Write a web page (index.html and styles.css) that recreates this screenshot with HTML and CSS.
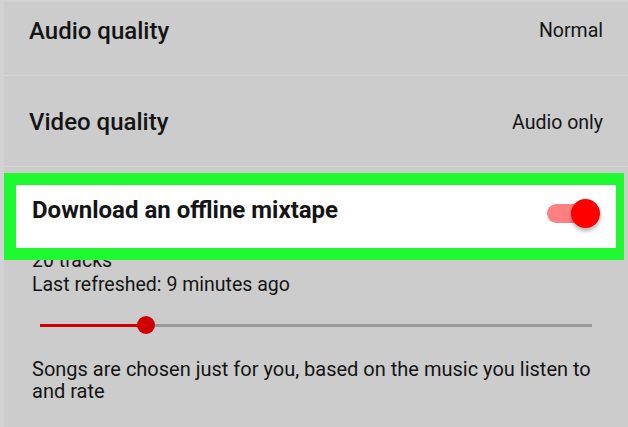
FILE: index.html
```html
<!DOCTYPE html>
<html>
<head>
<meta charset="utf-8">
<link rel="stylesheet" href="styles.css">
</head>
<body>
<div class="screen">
  <div class="row row-first">
    <span class="title">Audio quality</span>
    <span class="value">Normal</span>
  </div>
  <div class="row row-second">
    <span class="title">Video quality</span>
    <span class="value">Audio only</span>
  </div>
  <div class="highlight">
    <div class="toggle-row">
      <span class="toggle-title">Download an offline mixtape</span>
      <span class="switch"><span class="track"></span><span class="knob"></span></span>
    </div>
  </div>
  <div class="details">
    <p class="line">20 tracks</p>
    <p class="line">Last refreshed: 9 minutes ago</p>
    <div class="slider">
      <div class="fill" style="width: 106px"></div>
      <div class="rest"></div>
      <div class="thumb"></div>
    </div>
    <p class="desc">Songs are chosen just for you, based on the music you listen to and rate</p>
  </div>
</div>
</body>
</html>
```
FILE: styles.css
```css
html, body {
  margin: 0;
  padding: 0;
  background: #cccccc;
}
body {
  font-family: Roboto, "Liberation Sans", sans-serif;
  color: #141414;
  width: 628px;
  height: 427px;
  overflow: hidden;
}
.screen {
  border-top: 2px solid #d3d3d3;
  border-left: 4px solid #d3d3d3;
  height: 425px;
  background: #cccccc;
}
.row {
  box-sizing: border-box;
  display: flex;
  align-items: center;
  justify-content: space-between;
  padding: 0 25px 0 25px;
  border-bottom: 1px solid #d5d5d5;
}
.row-first {
  height: 74px;
  padding-bottom: 16px;
}
.row-second {
  height: 91px;
  padding-top: 2px;
}
.title {
  font-size: 24px;
  font-weight: 500;
}
.value {
  font-size: 19.5px;
}
.highlight {
  position: relative;
  z-index: 1;
  margin-top: 6px;
  width: 600px;
  border-style: solid;
  border-color: #1ff92f;
  border-width: 12px 8px 12px 12px;
  background: #ffffff;
}
.toggle-row {
  height: 63px;
  display: flex;
  align-items: center;
  justify-content: space-between;
  padding: 0 16px 0 16px;
}
.toggle-title {
  font-size: 24px;
  font-weight: 700;
  margin-bottom: 13px;
}
.switch {
  position: relative;
  width: 53px;
  height: 29px;
  margin-bottom: 6px;
}
.track {
  position: absolute;
  left: 0;
  top: 5px;
  width: 46px;
  height: 19px;
  border-radius: 10px;
  background: #ff8080;
}
.knob {
  position: absolute;
  right: 0;
  top: 0;
  width: 29px;
  height: 29px;
  border-radius: 50%;
  background: #ff0000;
  box-shadow: 0 3px 4px rgba(0, 0, 0, 0.3);
}
.details {
  margin-top: -11px;
  padding: 0 0 0 28px;
}
.line {
  margin: 0;
  font-size: 19.5px;
  line-height: 24px;
}
.slider {
  position: relative;
  display: flex;
  align-items: center;
  height: 20px;
  margin: 18px 0 0 8px;
  width: 552px;
}
.fill {
  height: 3px;
  background: #d10000;
}
.rest {
  flex: 1;
  height: 3px;
  background: #9a9a9a;
}
.thumb {
  position: absolute;
  left: 97px;
  top: 1px;
  width: 18px;
  height: 18px;
  border-radius: 50%;
  background: #d10000;
}
.desc {
  margin: 23px 0 0 0;
  width: 566px;
  font-size: 20px;
  line-height: 22px;
}
```
